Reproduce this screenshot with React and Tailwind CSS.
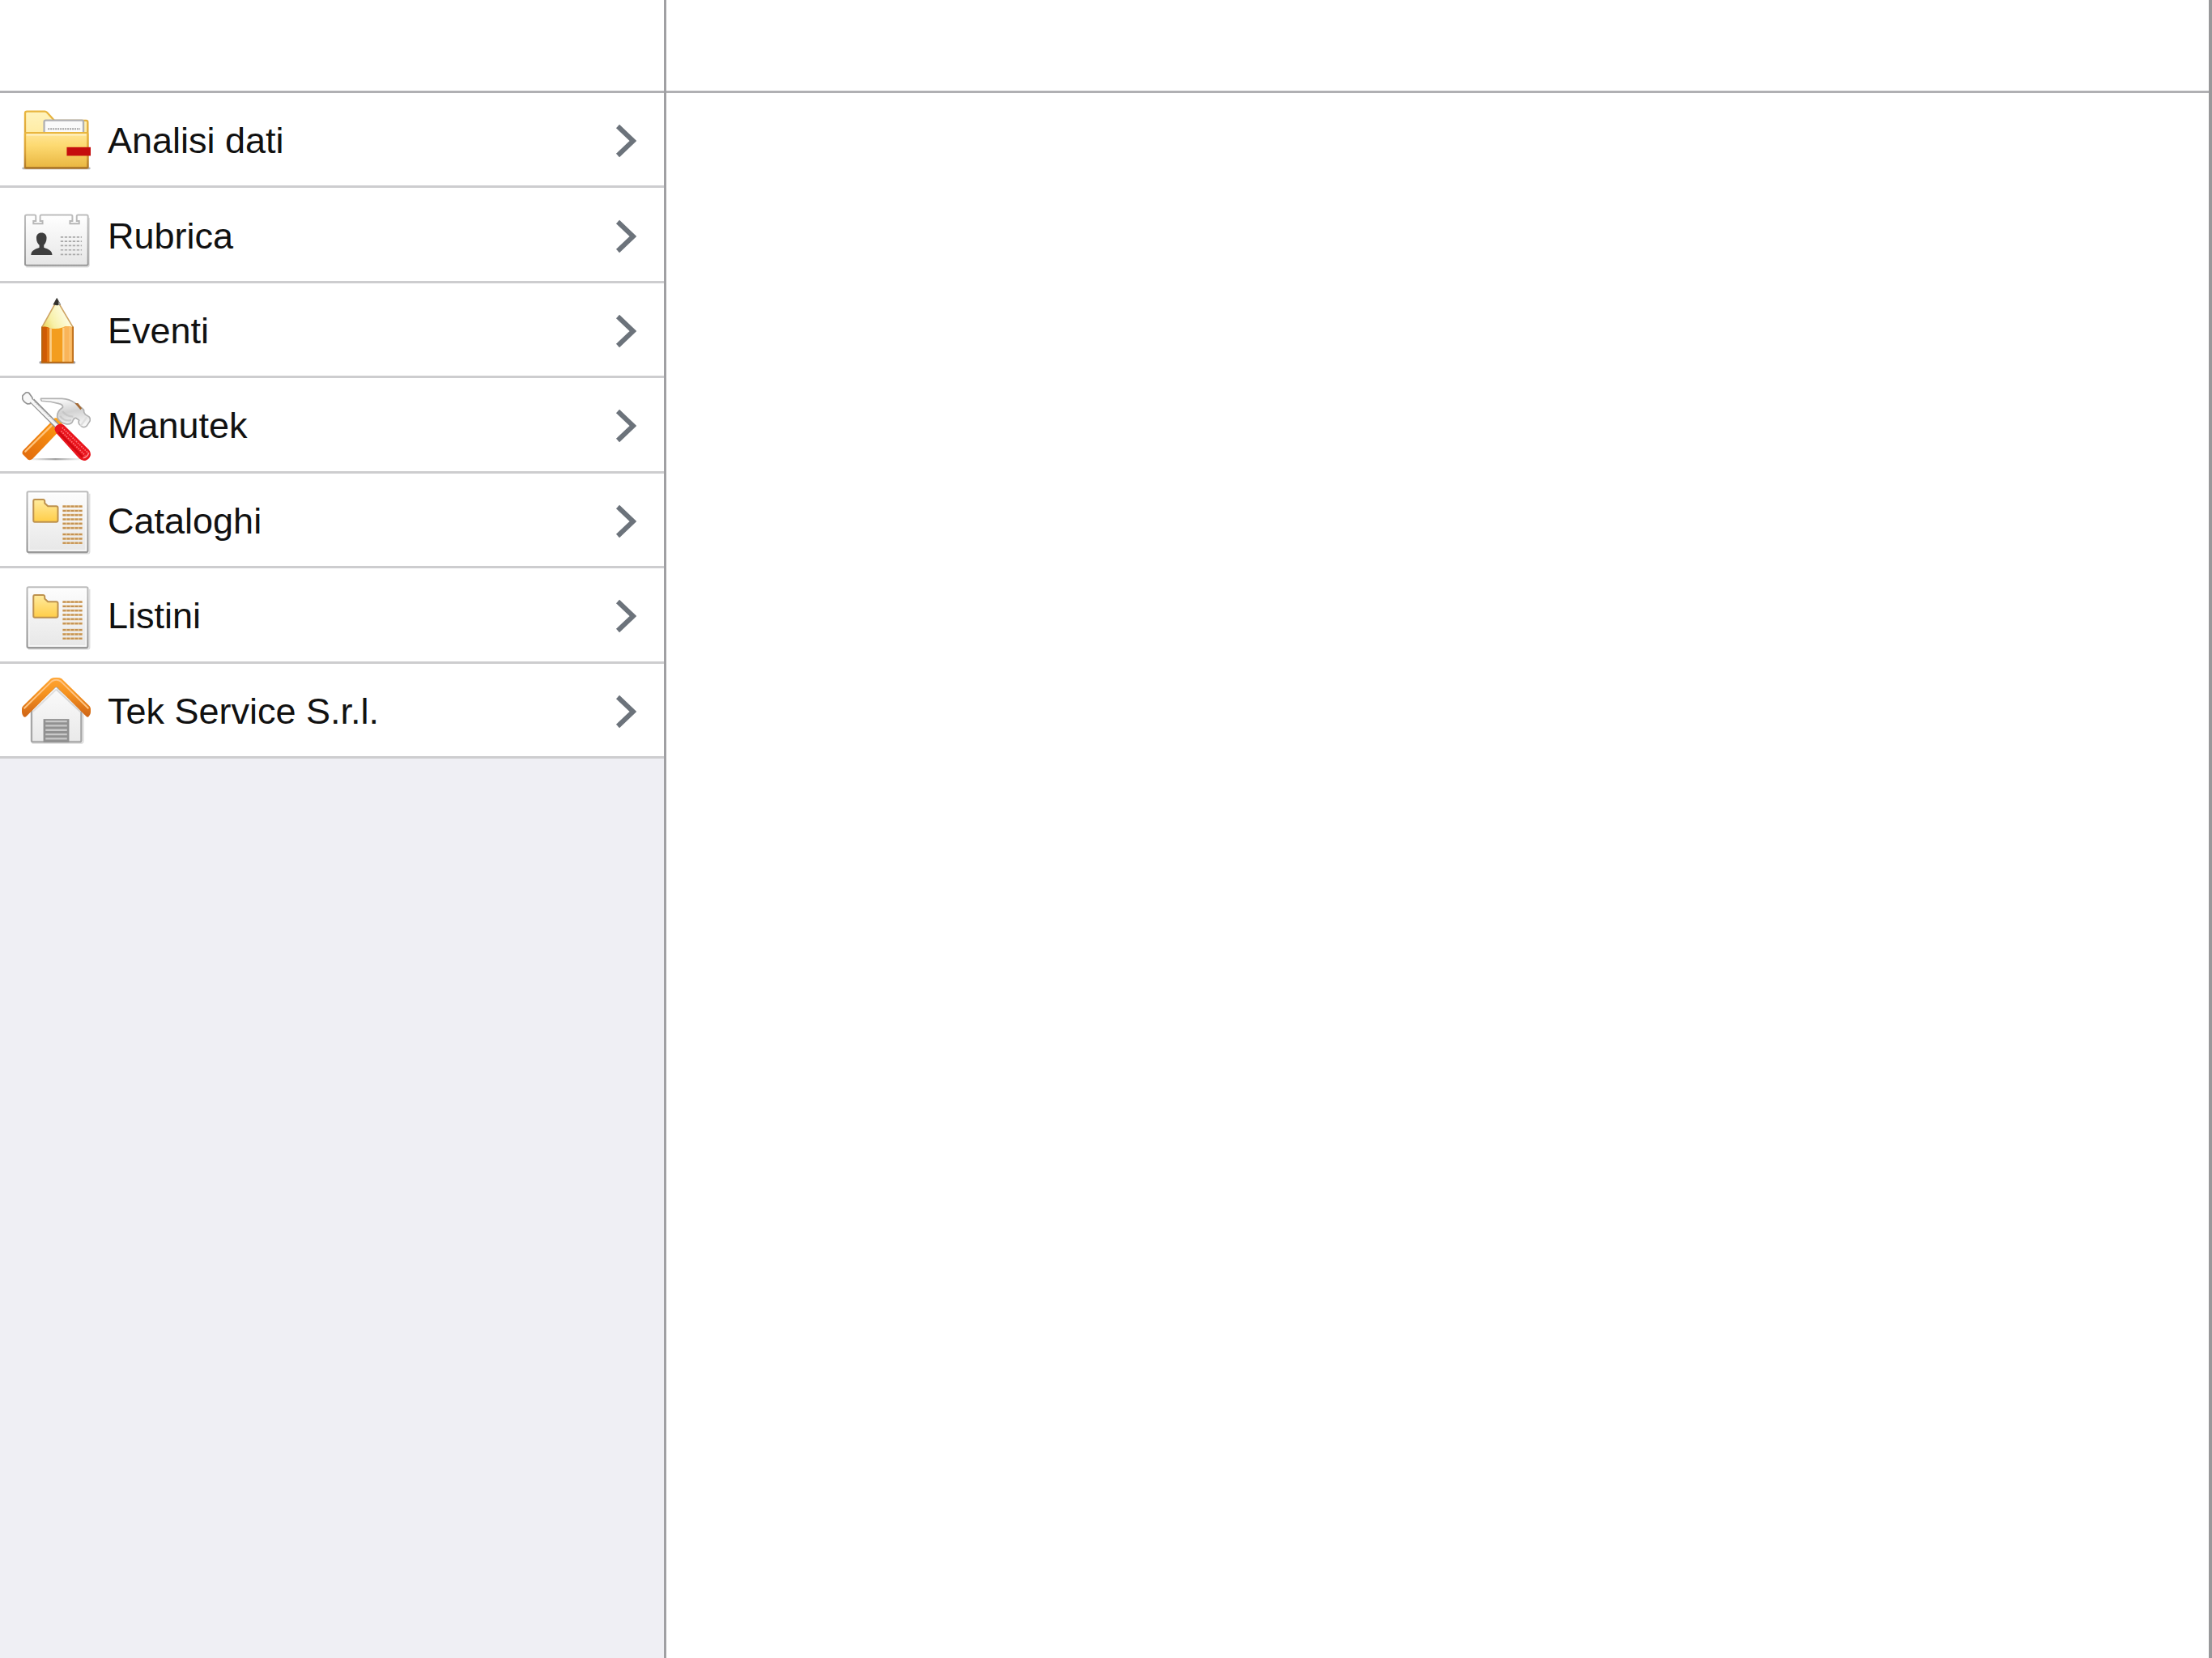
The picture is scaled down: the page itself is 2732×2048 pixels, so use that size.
import React from 'react';

function FolderIcon() {
  return (
    <svg viewBox="0 0 256 256" className="size-[85px] shrink-0" aria-hidden="true">
      <defs>
        <linearGradient id="folder-front" x1="0" y1="0" x2="0" y2="1">
          <stop offset="0" stopColor="#ffe596" />
          <stop offset="0.35" stopColor="#fdda72" />
          <stop offset="1" stopColor="#e9b640" />
        </linearGradient>
        <linearGradient id="folder-back" x1="0" y1="0" x2="0" y2="1">
          <stop offset="0" stopColor="#fff3bd" />
          <stop offset="1" stopColor="#ffe17c" />
        </linearGradient>
        <linearGradient id="folder-edge" x1="0" y1="0" x2="0" y2="1">
          <stop offset="0" stopColor="#e9b63f" />
          <stop offset="0.55" stopColor="#d9a136" />
          <stop offset="1" stopColor="#b17a28" />
        </linearGradient>
      </defs>
      <rect x="1" y="224" width="254" height="9" rx="4" fill="#b9b9bd" />
      <path d="M12 226V24q0-7 7-7h66q5 0 9 4l27 30h118q6 0 6 6v169z" fill="url(#folder-back)" stroke="url(#folder-edge)" strokeWidth="7" />
      <path d="M83 98V56q0-6 6-6h134q6 0 6 6v42z" fill="#fafafa" stroke="#b0b0b3" strokeWidth="7" />
      <path d="M97 82h120" stroke="#a0a0a0" strokeWidth="6" strokeDasharray="6 3" />
      <rect x="12" y="97" width="233" height="130" rx="4" fill="url(#folder-front)" stroke="url(#folder-edge)" strokeWidth="7" />
      <path d="M17 104h223" stroke="#fff1c4" strokeWidth="6" />
      <path d="M12 227h233" stroke="#aa7427" strokeWidth="6" />
      <rect x="167" y="150" width="89" height="32" fill="#c50d0d" />
    </svg>
  );
}

function ContactIcon() {
  return (
    <svg viewBox="0 0 256 256" className="size-[85px] shrink-0" aria-hidden="true">
      <defs>
        <linearGradient id="contact-card" x1="0" y1="0" x2="0" y2="1">
          <stop offset="0" stopColor="#ffffff" />
          <stop offset="1" stopColor="#e6e6e6" />
        </linearGradient>
        <linearGradient id="contact-edge" x1="0" y1="0" x2="0" y2="1">
          <stop offset="0" stopColor="#bdbdbd" />
          <stop offset="1" stopColor="#979797" />
        </linearGradient>
      </defs>
      <path d="M16 243H244q5 0 6-6V60" fill="none" stroke="#dddddd" strokeWidth="5" />
      <path
        d="M18 50h29q5 0 5 5v17h-9v10h34V72h-9V55q0-5 5-5h110q5 0 5 5v17h-9v10h34V72h-9V55q0-5 5-5h32q5 0 5 5v177q0 5-5 5H18q-6 0-6-5V55q0-5 6-5z"
        fill="url(#contact-card)"
        stroke="url(#contact-edge)"
        strokeWidth="6"
      />
      <path d="M73 116c12 0 19 8 19 19 0 14-5 22-10 27v9c12 6 30 8 31 28H34c1-20 19-22 31-28v-9c-6-5-11-13-11-27 0-11 7-19 19-19z" fill="#3e3e3e" />
      <path d="M144 132h79M144 148h79M144 164h79M144 180h79M144 197h79" stroke="#a8a8a8" strokeWidth="5" strokeDasharray="10 5" />
    </svg>
  );
}

function PencilIcon() {
  return (
    <svg viewBox="0 0 256 256" className="size-[85px] shrink-0" aria-hidden="true">
      <defs>
        <linearGradient id="pencil-wood" x1="0" y1="1" x2="1" y2="0.6">
          <stop offset="0" stopColor="#e8cf4e" />
          <stop offset="0.4" stopColor="#f7f0a8" />
          <stop offset="1" stopColor="#ffffee" />
        </linearGradient>
      </defs>
      <rect x="65" y="239" width="134" height="9" rx="3" fill="#a1a1a8" />
      <path d="M75 112L123 26h16l51 86v12H75z" fill="url(#pencil-wood)" stroke="#cfa565" strokeWidth="5" />
      <path d="M116 28l14-26 15 26q-14 5-29 0z" fill="#33322e" />
      <path d="M137 14l8 14-9 2z" fill="#aaa9a5" />
      <path d="M73 112q15-6 30 3 24 6 48-2 20-9 41 1v131H73z" fill="#f39d1e" />
      <path d="M73 112q15-6 30 3v130H73z" fill="#cf5b04" />
      <path d="M93 113l10 2v130H93z" fill="#e37612" />
      <path d="M103 115h8v128h-8zM151 113h8v130h-8z" fill="#fbd08a" />
      <path d="M159 111q16-6 33 3v131h-33z" fill="#f9b459" />
      <path d="M176 110h6v133h-6z" fill="#fbc273" />
      <path d="M75 110v133h115V110" fill="none" stroke="#b5640f" strokeWidth="5" />
    </svg>
  );
}

function ToolsIcon() {
  return (
    <svg viewBox="0 0 256 256" className="size-[85px] shrink-0" aria-hidden="true">
      <defs>
        <linearGradient id="tools-orange" x1="1" y1="0" x2="0" y2="1">
          <stop offset="0" stopColor="#ff9d13" />
          <stop offset="1" stopColor="#e0690d" />
        </linearGradient>
        <linearGradient id="tools-head" x1="0.3" y1="0" x2="0.6" y2="1">
          <stop offset="0" stopColor="#ffffff" />
          <stop offset="0.5" stopColor="#d2d2d2" />
          <stop offset="1" stopColor="#f8f8f8" />
        </linearGradient>
        <linearGradient id="tools-shadow">
          <stop offset="0" stopColor="#aaaaaa" stopOpacity="0" />
          <stop offset="0.5" stopColor="#a0a0a0" />
          <stop offset="1" stopColor="#aaaaaa" stopOpacity="0" />
        </linearGradient>
      </defs>
      <rect x="20" y="247" width="210" height="7" fill="url(#tools-shadow)" />
      <path d="M122 99l34 29-116 121q-8 7-17 3L3 232q-4-8 3-15z" fill="url(#tools-orange)" />
      <path d="M110 126L13 222" stroke="#ffc37a" strokeWidth="7" strokeLinecap="round" />
      <path d="M122 97h20l10 20-14 12-22-14z" fill="#ffa41d" />
      <path
        d="M71 25h78q28 1 48 16l27 20q8 5 7 15l5 8 14 9q6 7 3 16l-12 18q-9 8-18 2l-10-9q-4-7 0-14l-11-8q-8-2-12 9-4 15-24 13-24-4-34-24-4-22 20-38 2-10-14-14-30-9-64-10-5-5-3-9z"
        fill="url(#tools-head)"
        stroke="#b1b1b1"
        strokeWidth="5"
      />
      <path d="M151 72q14 20 40 20M142 90q16 22 42 15" fill="none" stroke="#bdbdbd" strokeWidth="7" opacity="0.6" />
      <path d="M197 42h12l14 19-5 6z" fill="#a56a35" />
      <path d="M242 94l-23 32" stroke="#dedede" strokeWidth="7" />
      <path d="M134 130L38 33" stroke="#929292" strokeWidth="21" />
      <path d="M3 14L15 3q7-3 12 2l12 17 1 10-10 12-9 1Q6 37 3 28q-2-8 0-14z" fill="#f8f8f8" stroke="#929292" strokeWidth="5" />
      <path d="M134 130L34 31" stroke="#f7f7f7" strokeWidth="12" />
      <path d="M124 116L45 37" stroke="#c0c0c0" strokeWidth="3" strokeDasharray="4 4" />
      <path d="M122 139q1-15 20-20 9-1 16 6l92 91q8 10 5 22-5 14-19 18-13 1-23-8l-83-92q-6-8-8-17z" fill="#e9151d" />
      <path d="M150 133l96 94M146 146l90 91" stroke="#ff7378" strokeWidth="5" strokeDasharray="5 4" />
      <path d="M137 150l88 92" stroke="#cf0710" strokeWidth="7" />
      <path d="M228 246q17-3 21-20" fill="none" stroke="#fb8589" strokeWidth="5" />
    </svg>
  );
}

function CatalogIcon() {
  return (
    <svg viewBox="0 0 256 256" className="size-[85px] shrink-0" aria-hidden="true">
      <defs>
        <linearGradient id="catalog-page" x1="0" y1="0" x2="0" y2="1">
          <stop offset="0" stopColor="#fdfdfd" />
          <stop offset="1" stopColor="#e7e7e7" />
        </linearGradient>
        <linearGradient id="catalog-edge" x1="0" y1="0" x2="0" y2="1">
          <stop offset="0" stopColor="#bebebe" />
          <stop offset="1" stopColor="#999999" />
        </linearGradient>
        <linearGradient id="catalog-folder" x1="0" y1="0" x2="0" y2="1">
          <stop offset="0" stopColor="#ffeb9f" />
          <stop offset="1" stopColor="#ffcd47" />
        </linearGradient>
      </defs>
      <path d="M24 249H247q5 0 5-5V26" fill="none" stroke="#dedede" strokeWidth="5" />
      <rect x="20" y="19" width="225" height="225" rx="5" fill="url(#catalog-page)" stroke="url(#catalog-edge)" strokeWidth="7" />
      <rect x="26" y="25" width="213" height="213" fill="none" stroke="#ffffff" strokeWidth="5" opacity="0.8" />
      <path d="M48 48h31q5 0 6 6v8l12 11h31q6 0 6 6v46q0 7-6 7H48q-5 0-5-6V54q0-6 5-6z" fill="url(#catalog-folder)" stroke="#bd914d" strokeWidth="6" />
      <path
        d="M151 74h75M151 90h75M151 106h75M151 122h75M151 138h75M151 154h75M151 178h75M151 194h75M151 210h75"
        stroke="#e1bd87"
        strokeWidth="8"
      />
      <path
        d="M153 74h73M153 90h73M153 106h73M153 122h73M153 138h73M153 154h73M153 178h73M153 194h73M153 210h73"
        stroke="#c29052"
        strokeWidth="6"
        strokeDasharray="10 5"
      />
    </svg>
  );
}

function HouseIcon() {
  return (
    <svg viewBox="0 0 256 256" className="size-[85px] shrink-0" aria-hidden="true">
      <defs>
        <linearGradient id="house-wall" x1="0" y1="0" x2="0" y2="1">
          <stop offset="0" stopColor="#fbfbfb" />
          <stop offset="1" stopColor="#e9e9e9" />
        </linearGradient>
        <linearGradient id="house-roof" x1="0" y1="0" x2="0" y2="1">
          <stop offset="0" stopColor="#ffa532" />
          <stop offset="0.4" stopColor="#f6931f" />
          <stop offset="1" stopColor="#cf6416" />
        </linearGradient>
      </defs>
      <path d="M38 247h186q4-1 4-6V135" fill="none" stroke="#dcdcdc" strokeWidth="5" />
      <path d="M36 118l91-84 94 84v119q0 5-5 5H41q-5 0-5-5z" fill="url(#house-wall)" stroke="#a6a6a6" strokeWidth="7" />
      <path d="M128 47l-88 83" stroke="#dedede" strokeWidth="6" />
      <path d="M128 47l90 83" stroke="#d7d7d7" strokeWidth="6" />
      <rect x="80" y="157" width="96" height="87" fill="#919191" />
      <path d="M88 166h80M88 182h80M88 198h80M88 214h80M88 230h80" stroke="#c9c9c9" strokeWidth="7" />
      <path
        d="M108 7q6-4 20-4t20 4l104 102q4 5 4 11v12q0 8-6 14-5 7-11 1L140 48q-7-10-12-10t-12 10L17 147q-7 6-12-1-5-7-5-15v-12q0-6 4-10z"
        fill="url(#house-roof)"
      />
      <path d="M8 118L111 17q8-6 17-6t17 6l103 101" fill="none" stroke="#ffc583" strokeWidth="6" />
    </svg>
  );
}

function Chevron() {
  return (
    <svg viewBox="0 0 26 42" className="h-[42px] w-[26px] shrink-0" aria-hidden="true">
      <path d="M3 3l19 18L3 39" fill="none" stroke="#6c737b" strokeWidth="6" />
    </svg>
  );
}

const MENU_ITEMS = [
  { label: 'Analisi dati', icon: FolderIcon },
  { label: 'Rubrica', icon: ContactIcon },
  { label: 'Eventi', icon: PencilIcon },
  { label: 'Manutek', icon: ToolsIcon },
  { label: 'Cataloghi', icon: CatalogIcon },
  { label: 'Listini', icon: CatalogIcon },
  { label: 'Tek Service S.r.l.', icon: HouseIcon },
];

export default function App() {
  return (
    <div className="flex min-h-screen bg-white font-['Liberation_Sans',Arial,sans-serif] text-[#111111]">
      <aside className="box-content w-[30%] shrink-0 border-r-3 border-[#a0a0a3] bg-[#efeff4]">
        <header className="h-[115px] border-b-3 border-[#b0b0b3] bg-white" />
        <nav>
          <ul className="grid min-h-[822px] auto-rows-fr">
            {MENU_ITEMS.map(({ label, icon: Icon }) => (
              <li key={label} className="border-b-3 border-[#cdcdcf] bg-white">
                <a href="#" className="flex h-full items-center pt-1 pr-[34px] pl-[27px]">
                  <Icon />
                  <span className="ml-[21px] flex-1 text-[45px] leading-[52px]">{label}</span>
                  <Chevron />
                </a>
              </li>
            ))}
          </ul>
        </nav>
      </aside>
      <main className="flex-1 border-r-4 border-[#98989a]">
        <header className="h-[115px] border-b-3 border-[#b0b0b3]" />
      </main>
    </div>
  );
}
